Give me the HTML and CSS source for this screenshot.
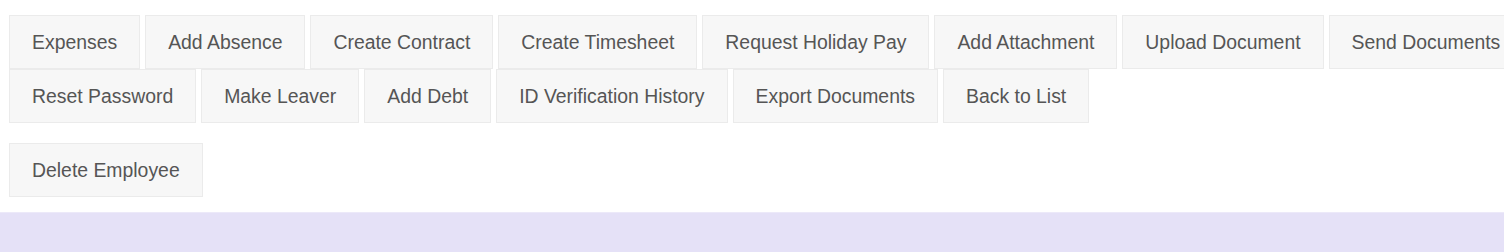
FILE: index.html
```html
<!DOCTYPE html>
<html lang="en">

<head>
  <meta charset="UTF-8" />
  <meta name="viewport" content="width=device-width, initial-scale=1.0" />
  <title>Employee actions</title>
  <link rel="stylesheet" href="styles.css">
</head>

<body>
  <div class="actions">
    <div class="btn-row">
      <a class="btn" href="javascript:;">Expenses</a>
      <a class="btn" href="javascript:;">Add Absence</a>
      <a class="btn" href="javascript:;">Create Contract</a>
      <a class="btn" href="javascript:;">Create Timesheet</a>
      <a class="btn" href="javascript:;">Request Holiday Pay</a>
      <a class="btn" href="javascript:;">Add Attachment</a>
      <a class="btn" href="javascript:;">Upload Document</a>
      <a class="btn" href="javascript:;">Send Documents</a>
      <a class="btn" href="javascript:;">Reset Password</a>
      <a class="btn" href="javascript:;">Make Leaver</a>
      <a class="btn" href="javascript:;">Add Debt</a>
      <a class="btn" href="javascript:;">ID Verification History</a>
      <a class="btn" href="javascript:;">Export Documents</a>
      <a class="btn" href="javascript:;">Back to List</a>
    </div>
    <div class="btn-row danger-row">
      <a class="btn" href="javascript:;">Delete Employee</a>
    </div>
  </div>
  <div class="panel"></div>
</body>

</html>
```

FILE: styles.css
```css
* {
  margin: 0;
  padding: 0;
  box-sizing: border-box;
}

body {
  font-family: "Liberation Sans", Arial, sans-serif;
  background: #fff;
  overflow: hidden;
}

.actions {
  width: 1560px;
  padding: 15px 9px 0;
}

.btn-row {
  display: flex;
  flex-wrap: wrap;
  column-gap: 5px;
}

.danger-row {
  margin-top: 20px;
}

.btn {
  display: block;
  height: 54px;
  padding: 0 22px;
  line-height: 52px;
  font-size: 19.4px;
  color: #555;
  text-decoration: none;
  background: #f7f7f7;
  border: 1px solid #ebebeb;
  white-space: nowrap;
}

.panel {
  margin-top: 15px;
  height: 40px;
  background: #e5e1f7;
  border-top: 1px solid #ece9f9;
}
```
